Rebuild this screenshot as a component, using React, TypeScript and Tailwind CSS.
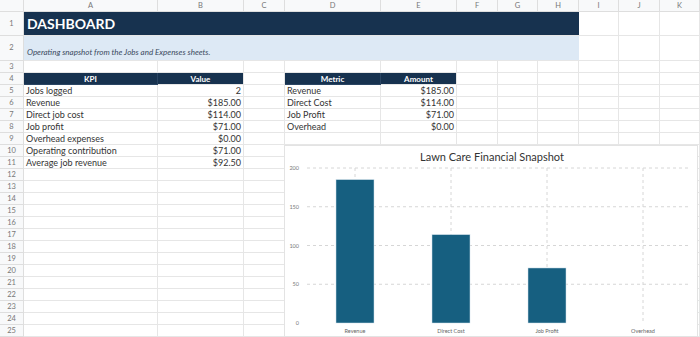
const cols = ["A", "B", "C", "D", "E", "F", "G", "H", "I", "J", "K"]

const kpis: [string, string][] = [
  ["Jobs logged", "2"],
  ["Revenue", "$185.00"],
  ["Direct job cost", "$114.00"],
  ["Job profit", "$71.00"],
  ["Overhead expenses", "$0.00"],
  ["Operating contribution", "$71.00"],
  ["Average job revenue", "$92.50"],
]

const metrics: [string, string][] = [
  ["Revenue", "$185.00"],
  ["Direct Cost", "$114.00"],
  ["Job Profit", "$71.00"],
  ["Overhead", "$0.00"],
]

const chartData = [
  { label: "Revenue", value: 185 },
  { label: "Direct Cost", value: 114 },
  { label: "Job Profit", value: 71 },
  { label: "Overhead", value: 0 },
]

const cell = "border-r border-b border-[#e6e6e6] overflow-hidden whitespace-nowrap"
const rowHead = "border-r border-b border-[#dedede] bg-[#f8f9fa] text-[7.5px] text-[#777] flex items-center justify-center"

function Chart() {
  const left = 22
  const right = 406
  const top = 22
  const zero = 177
  const scale = (zero - top) / 200
  const step = (right - left) / 4
  return (
    <div className="absolute left-[284px] top-[145px] w-[414px] h-[192px] bg-white border border-[#e3e3e3]">
      <svg width="414" height="192" className="block">
        <text x="207" y="15" textAnchor="middle" fontSize="11" fill="#333" fontFamily="Lato, sans-serif">
          Lawn Care Financial Snapshot
        </text>
        {[200, 150, 100, 50].map((v) => (
          <line key={v} x1={left} x2={right} y1={zero - v * scale} y2={zero - v * scale} stroke="#d6d6d6" strokeWidth="1" strokeDasharray="3 3" />
        ))}
        {chartData.map((d, i) => (
          <line key={d.label} x1={left + step * (i + 0.5)} x2={left + step * (i + 0.5)} y1={top} y2={zero} stroke="#d6d6d6" strokeWidth="1" strokeDasharray="3 3" />
        ))}
        {[200, 150, 100, 50, 0].map((v) => (
          <text key={v} x="14" y={zero - v * scale + 2} textAnchor="end" fontSize="5.5" fill="#777" fontFamily="Lato, sans-serif">
            {v}
          </text>
        ))}
        {chartData.map((d, i) => {
          const cx = left + step * (i + 0.5)
          const h = d.value * scale
          return (
            <g key={d.label}>
              {h > 0 && <rect x={cx - 19} y={zero - h} width="38" height={h} fill="#165f80" stroke="#cfe0ea" strokeWidth="0.5" />}
              <text x={cx} y={zero + 10} textAnchor="middle" fontSize="5.5" fill="#666" fontFamily="Lato, sans-serif">
                {d.label}
              </text>
            </g>
          )
        })}
      </svg>
    </div>
  )
}

export default function App() {
  const dataRows = Array.from({ length: 21 }, (_, i) => i + 5)
  return (
    <div className="relative w-[700px] h-[337px] overflow-hidden bg-white font-['Lato','Liberation_Sans',sans-serif] text-[#333]">
      <div className="grid grid-cols-[24px_134px_86px_41px_96px_76px_41px_40px_41px_40px_41px_40px] grid-rows-[12px_24px_25px_12px_12px_repeat(21,12px)]">
        {/* column headers */}
        <div className={rowHead}></div>
        {cols.map((c) => (
          <div key={c} className={rowHead}>{c}</div>
        ))}

        {/* row 1 */}
        <div className={rowHead}>1</div>
        <div className="col-span-8 bg-[#17324f] border-b border-[#e6e6e6] flex items-center px-[3px] text-white font-bold text-[14px]">
          DASHBOARD
        </div>
        <div className={cell}></div>
        <div className={cell}></div>
        <div className={cell}></div>

        {/* row 2 */}
        <div className={rowHead}>2</div>
        <div className="col-span-8 bg-[#dde9f5] border-b border-[#e6e6e6] flex items-end pb-[2px] px-[3px] text-[8px] italic text-[#3a4a5e]">
          Operating snapshot from the Jobs and Expenses sheets.
        </div>
        <div className={cell}></div>
        <div className={cell}></div>
        <div className={cell}></div>

        {/* row 3 */}
        <div className={rowHead}>3</div>
        {cols.map((c) => (
          <div key={c} className={cell}></div>
        ))}

        {/* row 4 */}
        <div className={rowHead}>4</div>
        <div className="bg-[#17324f] border-b border-r border-[#2a4563] text-white font-bold text-[8px] flex items-center justify-center">KPI</div>
        <div className="bg-[#17324f] border-b border-r border-[#e6e6e6] text-white font-bold text-[8px] flex items-center justify-center">Value</div>
        <div className={cell}></div>
        <div className="bg-[#17324f] border-b border-r border-[#2a4563] text-white font-bold text-[8px] flex items-center justify-center">Metric</div>
        <div className="bg-[#17324f] border-b border-r border-[#e6e6e6] text-white font-bold text-[8px] flex items-center justify-center">Amount</div>
        {cols.slice(5).map((c) => (
          <div key={c} className={cell}></div>
        ))}

        {/* rows 5..25 */}
        {dataRows.map((r) => {
          const k = kpis[r - 5]
          const m = metrics[r - 5]
          return (
            <div key={r} className="contents">
              <div className={rowHead}>{r}</div>
              <div className={`${cell} text-[9px] leading-[11px] px-[2px]`}>{k ? k[0] : ""}</div>
              <div className={`${cell} text-[9px] leading-[11px] px-[2px] text-right`}>{k ? k[1] : ""}</div>
              <div className={cell}></div>
              <div className={`${cell} text-[9px] leading-[11px] px-[2px]`}>{m ? m[0] : ""}</div>
              <div className={`${cell} text-[9px] leading-[11px] px-[2px] text-right`}>{m ? m[1] : ""}</div>
              {cols.slice(5).map((c) => (
                <div key={c} className={cell}></div>
              ))}
            </div>
          )
        })}
      </div>
      <Chart />
    </div>
  )
}
